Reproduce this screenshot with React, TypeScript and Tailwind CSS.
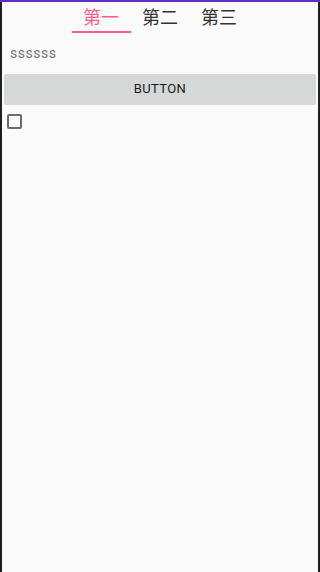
const tabs = ["第一", "第二", "第三"];

const App = () => {
  return (
    <div className="w-[320px] h-[572px] bg-[#1f1f1f] pl-[2px] pr-[2px] overflow-hidden">
      <div className="h-full bg-[#fafafa] flex flex-col" style={{ fontFamily: "Roboto, 'Noto Sans CJK SC', sans-serif" }}>
        <div className="h-[2px] bg-[#5a2fc2] -mx-[2px]" />
        <div className="flex justify-center h-[31px]">
          {tabs.map((t, i) => (
            <div key={t} className="w-[59px] flex flex-col items-center">
              <span className={`text-[18px] leading-[24px] mt-[4px] ${i === 0 ? "text-[#ff5c8d]" : "text-[#333333]"}`}>{t}</span>
              <div className={`mt-auto h-[2px] w-full ${i === 0 ? "bg-[#ff5c8d]" : "bg-transparent"}`} />
            </div>
          ))}
        </div>
        <div className="px-[8px] pt-[10px] text-[14px] leading-[20px] text-[#757575] tracking-[0.5px]">ssssss</div>
        <div className="px-[2px] mt-[11px]">
          <button className="w-full h-[30px] bg-[#d6d7d7] rounded-[2px] text-[13px] font-normal text-[#1a1a1a] tracking-[0.4px] shadow-[0_1px_1px_rgba(0,0,0,0.15)]">
            BUTTON
          </button>
        </div>
        <div className="pl-[5px] pt-[10px]">
          <div className="w-[15px] h-[15px] border-2 border-[#6b6b6b] rounded-[2px]" />
        </div>
      </div>
    </div>
  );
};

export default App;
